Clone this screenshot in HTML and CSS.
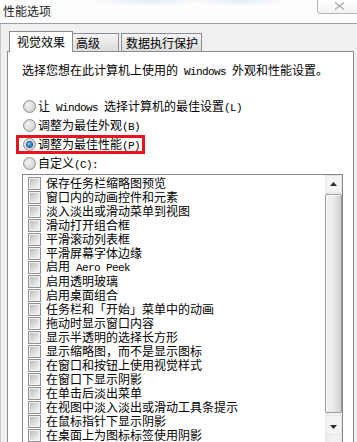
FILE: index.html
```html
<!DOCTYPE html>
<html lang="zh-CN">
<head>
<meta charset="utf-8">
<title>性能选项</title>
<link rel="stylesheet" href="styles.css">
</head>
<body>
<div class="window">
  <div class="titlebar">
    <span class="title">性能选项</span>
    <div class="close">
      <svg width="11" height="8" viewBox="0 0 11 8"><path d="M1 0.5 L10 7.5 M10 0.5 L1 7.5" stroke="#a7a7a7" stroke-width="1.2" fill="none"/></svg>
    </div>
  </div>
  <div class="client">
    <div class="tabs">
      <div class="tab active">视觉效果</div>
      <div class="tab t2">高级</div>
      <div class="tab t3">数据执行保护</div>
    </div>
    <div class="panel">
      <p class="desc">选择您想在此计算机上使用的<span class="lat">&nbsp;Windows&nbsp;</span>外观和性能设置。</p>
      <div class="radios">
        <div class="radio-row"><span class="ri"><span class="radio"></span><span class="rt">让<span class="lat">&nbsp;Windows&nbsp;</span>选择计算机的最佳设置<span class="lat">(L)</span></span></span></div>
        <div class="radio-row"><span class="ri"><span class="radio"></span><span class="rt">调整为最佳外观<span class="lat">(B)</span></span></span></div>
        <div class="radio-row"><span class="ri hl"><span class="radio on"></span><span class="rt">调整为最佳性能<span class="lat">(P)</span></span></span></div>
        <div class="radio-row"><span class="ri"><span class="radio"></span><span class="rt">自定义<span class="lat">(C):</span></span></span></div>
      </div>
      <div class="list">
        <div class="items">
          <div class="item"><span class="cb"></span><span>保存任务栏缩略图预览</span></div>
          <div class="item"><span class="cb"></span><span>窗口内的动画控件和元素</span></div>
          <div class="item"><span class="cb"></span><span>淡入淡出或滑动菜单到视图</span></div>
          <div class="item"><span class="cb"></span><span>滑动打开组合框</span></div>
          <div class="item"><span class="cb"></span><span>平滑滚动列表框</span></div>
          <div class="item"><span class="cb"></span><span>平滑屏幕字体边缘</span></div>
          <div class="item"><span class="cb"></span><span>启用<span class="lat">&nbsp;Aero Peek</span></span></div>
          <div class="item"><span class="cb"></span><span>启用透明玻璃</span></div>
          <div class="item"><span class="cb"></span><span>启用桌面组合</span></div>
          <div class="item"><span class="cb"></span><span>任务栏和「开始」菜单中的动画</span></div>
          <div class="item"><span class="cb"></span><span>拖动时显示窗口内容</span></div>
          <div class="item"><span class="cb"></span><span>显示半透明的选择长方形</span></div>
          <div class="item"><span class="cb"></span><span>显示缩略图，而不是显示图标</span></div>
          <div class="item"><span class="cb"></span><span>在窗口和按钮上使用视觉样式</span></div>
          <div class="item"><span class="cb"></span><span>在窗口下显示阴影</span></div>
          <div class="item"><span class="cb"></span><span>在单击后淡出菜单</span></div>
          <div class="item"><span class="cb"></span><span>在视图中淡入淡出或滑动工具条提示</span></div>
          <div class="item"><span class="cb"></span><span>在鼠标指针下显示阴影</span></div>
          <div class="item"><span class="cb"></span><span>在桌面上为图标标签使用阴影</span></div>
        </div>
        <div class="scrollbar">
          <div class="sb-btn"><svg width="7" height="4" viewBox="0 0 7 4"><path d="M3.5 0 L7 4 L0 4 Z" fill="#2b2b2b"/></svg></div>
          <div class="thumb"></div>
          <div class="sb-btn down"><svg width="7" height="4" viewBox="0 0 7 4"><path d="M0 0 L7 0 L3.5 4 Z" fill="#2b2b2b"/></svg></div>
        </div>
      </div>
    </div>
  </div>
</div>
</body>
</html>
```
FILE: styles.css
```css
* { box-sizing: border-box; }
html, body {
  margin: 0;
  padding: 0;
  width: 357px;
  height: 442px;
  overflow: hidden;
  background: #f0f0f0;
  font-family: "Noto Sans CJK SC", "Noto Sans", sans-serif;
  font-size: 12px;
  color: #000;
}
.window {
  display: flex;
  flex-direction: column;
  height: 442px;
}
.titlebar {
  height: 24px;
  flex: none;
  display: flex;
  align-items: flex-start;
  background:
    radial-gradient(ellipse 60px 6px at 150px 0px, rgba(170,200,230,0.35), transparent),
    radial-gradient(ellipse 50px 5px at 240px 1px, rgba(170,200,230,0.3), transparent),
    #fdfdfd;
  border-bottom: 1px solid #9a9ea6;
}
.title {
  padding-left: 3px;
  line-height: 22px;
  color: #1b1b24;
}
.close {
  margin-left: auto;
  margin-right: -3px;
  width: 43px;
  height: 14px;
  border: 1px solid #b7b7b7;
  border-top: none;
  border-right: none;
  border-bottom-left-radius: 4px;
  background: linear-gradient(#ffffff, #f2f2f2);
  display: flex;
  align-items: center;
  justify-content: center;
  padding-bottom: 2px;
}
.client {
  flex: 1;
  display: flex;
  flex-direction: column;
  border-left: 1px solid #c9c9c9;
}
.tabs {
  display: flex;
  align-items: flex-end;
  margin-top: 7px;
  padding-left: 8px;
  margin-bottom: -1px;
  position: relative;
  z-index: 1;
}
.tab {
  height: 18px;
  margin-bottom: 1px;
  border: 1px solid #898c95;
  border-bottom: none;
  background: linear-gradient(#f4f4f4, #e9e9e9 50%, #dcdcdc);
  line-height: 17px;
  white-space: nowrap;
}
.tab.active {
  height: 21px;
  margin-bottom: 0;
  background: #fff;
  width: 64px;
  padding-left: 7px;
  line-height: 19px;
}
.tab.t2 {
  width: 46px;
  padding-left: 3px;
  border-left: none;
}
.tab.t3 {
  margin-left: 2px;
  width: 81px;
  padding-left: 4px;
}
.panel {
  flex: 1;
  margin-left: 6px;
  margin-right: 3px;
  border: 1px solid #898c95;
  background: #fff;
  padding: 0 10px 0 14px;
}
.desc {
  margin: 11px 0 0 0;
  line-height: 14px;
  white-space: nowrap;
}
.lat {
  font-family: "Liberation Mono", "DejaVu Sans Mono", monospace;
  font-size: 11px;
  letter-spacing: -0.6px;
}
.radios {
  margin-top: 18px;
  margin-left: -3px;
}
.radio-row {
  height: 19px;
  display: flex;
  align-items: center;
}
.ri {
  display: inline-flex;
  align-items: center;
  height: 13px;
  padding: 0 2px 0 4px;
  white-space: nowrap;
}
.rt {
  line-height: 13px;
}
.ri.hl {
  outline: 3px solid #e8141c;
}
.radio {
  width: 13px;
  height: 13px;
  border-radius: 50%;
  border: 1px solid #8e8f8f;
  background: radial-gradient(circle at 40% 40%, #f4f4f4, #d4d4d4 70%, #c4c4c4);
  margin-right: 2px;
  flex: none;
  display: flex;
  align-items: center;
  justify-content: center;
}
.radio.on::after {
  content: "";
  width: 5px;
  height: 5px;
  border-radius: 50%;
  background: radial-gradient(circle at 40% 35%, #8ed0ff, #1c6fc4 60%, #0b3f86);
  box-shadow: 0 0 0 1px #29518a;
}
.list {
  margin-top: 1px;
  border: 1px solid #828790;
  display: flex;
  height: 300px;
}
.items {
  flex: 1;
  padding: 1px 0 0 5px;
}
.item {
  height: 14px;
  display: flex;
  align-items: center;
  white-space: nowrap;
  line-height: 14px;
}
.cb {
  width: 13px;
  height: 13px;
  flex: none;
  border: 1px solid #8e8f8f;
  background: #f4f4f4;
  margin-right: 5px;
  position: relative;
}
.cb::after {
  content: "";
  position: absolute;
  left: 1px;
  top: 1px;
  right: 1px;
  bottom: 1px;
  background: linear-gradient(135deg, #b8bbc0, #e6e7e8 70%, #f2f2f2);
}
.scrollbar {
  width: 17px;
  flex: none;
  display: flex;
  flex-direction: column;
  background: linear-gradient(90deg, #e7e7e7, #f2f2f2 40%, #f2f2f2 80%, #e7e7e7);
}
.sb-btn {
  height: 18px;
  display: flex;
  align-items: center;
  justify-content: center;
  background: #f3f3f3;
  border: 1px solid #e6e6e6;
}
.sb-btn.down {
  height: 20px;
  margin-top: 2px;
  padding-top: 4px;
}
.thumb {
  height: 219px;
  margin-top: 1px;
  border: 1px solid #9b9b9b;
  border-radius: 2px;
  background: linear-gradient(90deg, #f2f2f2, #ececec 45%, #dcdcdc 75%, #cfcfcf);
  box-shadow: inset 1px 1px 0 #ffffff;
}
```
